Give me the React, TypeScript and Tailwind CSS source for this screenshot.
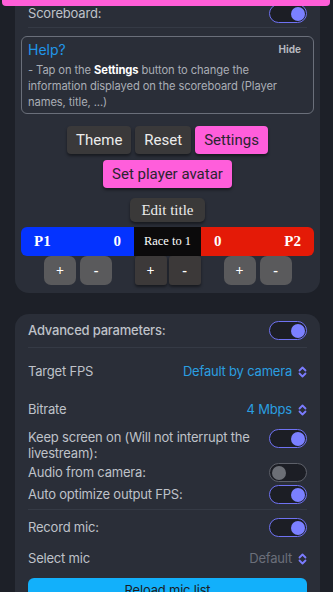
import React from "react";

const Toggle = ({ on = true }: { on?: boolean }) => (
  <div
    className={`w-[38px] h-[19px] rounded-full border-[1.5px] bg-[#1c1e25] flex items-center px-[1.5px] ${
      on ? "border-[#6f72f2] justify-end" : "border-[#5d6069] justify-start"
    }`}
  >
    <div className={`w-[14px] h-[14px] rounded-full ${on ? "bg-[#7b80ff]" : "bg-[#6c6f76]"}`} />
  </div>
);

const UpDown = () => (
  <svg width="9" height="12" viewBox="0 0 9 12" fill="none" stroke="#7b7cff" strokeWidth="1.8" strokeLinecap="round" strokeLinejoin="round">
    <path d="M1.5 4.5 L4.5 1.5 L7.5 4.5" />
    <path d="M1.5 7.5 L4.5 10.5 L7.5 7.5" />
  </svg>
);

const Dark = ({ children }: { children: React.ReactNode }) => (
  <button className="h-[28px] px-[9px] rounded-[4px] bg-[#3a393a] text-[#ececec] text-[15px] shadow-[0_2px_3px_rgba(0,0,0,0.45)]">
    {children}
  </button>
);

const Pink = ({ children }: { children: React.ReactNode }) => (
  <button className="h-[28px] px-[9px] rounded-[4px] bg-[#ff5edb] text-[#2b2430] text-[15px] shadow-[0_2px_3px_rgba(0,0,0,0.45)]">
    {children}
  </button>
);

const Step = ({ label, light = true }: { label: string; light?: boolean }) => (
  <button
    className={`w-[32px] h-[29px] flex items-center justify-center text-white text-[14px] font-bold ${
      light ? "bg-[#5a5a5c] rounded-[7px]" : "bg-[#3c3939] rounded-[3px] shadow-[0_2px_3px_rgba(0,0,0,0.45)]"
    }`}
  >
    {label}
  </button>
);

const App = () => {
  return (
    <div className="relative h-[592px] w-[333px] overflow-hidden bg-[#1d2028] font-['Inter',sans-serif]">
      <div className="absolute top-0 left-[2px] right-[3px] h-[6px] bg-[#ff5ed8] rounded-b-[4px] z-10" />

      <div className="ml-[15px] mr-[13px] bg-[#2a2e38] rounded-b-[14px] pt-[4px] pb-[8px]">
        <div className="flex items-center justify-between h-[19px] px-[13px]">
          <span className="text-[13px] tracking-[-0.2px] text-[#bfc2c9]">Scoreboard:</span>
          <Toggle />
        </div>
        <div className="mx-[13px] mt-[4px] border-b border-[#353a45]" />

        <div className="mx-[6px] mt-[8px] h-[78px] border-[1.5px] border-[#6a6f7a] rounded-[6px] px-[6px] pt-[3px]">
          <div className="flex items-center justify-between h-[19px]">
            <span className="text-[14px] text-[#2196e8]">Help?</span>
            <span className="text-[10px] font-bold text-[#b5b8bf] pr-[6px]">Hide</span>
          </div>
          <p className="mt-[3px] text-[11.2px] tracking-[-0.1px] leading-[16px] text-[#a9adb5]">
            - Tap on the <b className="text-white">Settings</b> button to change the information displayed on the scoreboard (Player names, title, ...)
          </p>
        </div>

        <div className="mt-[12px] flex flex-col items-center gap-[6px] font-['Roboto',sans-serif]">
          <div className="flex gap-[4px]">
            <Dark>Theme</Dark>
            <Dark>Reset</Dark>
            <Pink>Settings</Pink>
          </div>
          <Pink>Set player avatar</Pink>
          <button className="mt-[4px] h-[24px] px-[11px] rounded-[5px] bg-[#3a3939] text-[#ececec] text-[15px] font-['Liberation_Serif',serif] shadow-[0_2px_3px_rgba(0,0,0,0.45)]">
            Edit title
          </button>
        </div>

        <div className="mx-[6px] mt-[5px] flex font-['Liberation_Serif',serif]">
          <div className="w-[113px] flex flex-col items-center">
            <div className="w-full h-[29px] bg-[#0433ff] rounded-l-[6px] flex items-center justify-between px-[13px] text-white text-[15px] font-bold">
              <span>P1</span>
              <span>0</span>
            </div>
            <div className="flex gap-[4px] pl-[1px]">
              <Step label="+" />
              <Step label="-" />
            </div>
          </div>
          <div className="w-[67px] flex flex-col items-center">
            <div className="w-full h-[29px] bg-[#0b0a0b] flex items-center justify-center text-white text-[12.5px]">
              Race to 1
            </div>
            <div className="flex gap-[2px]">
              <Step label="+" light={false} />
              <Step label="-" light={false} />
            </div>
          </div>
          <div className="flex-1 flex flex-col items-center">
            <div className="w-full h-[29px] bg-[#e41a07] rounded-r-[6px] flex items-center justify-between px-[13px] text-white text-[15px] font-bold">
              <span>0</span>
              <span>P2</span>
            </div>
            <div className="flex gap-[4px]">
              <Step label="+" />
              <Step label="-" />
            </div>
          </div>
        </div>
      </div>

      <div className="ml-[15px] mr-[13px] mt-[21px] bg-[#2a2e38] rounded-t-[14px] pt-[7px] px-[13px] text-[13px] tracking-[-0.2px] text-[#bfc2c9]">
        <div className="flex items-center justify-between h-[19px]">
          <span className="font-medium">Advanced parameters:</span>
          <Toggle />
        </div>
        <div className="mt-[7px] border-b border-[#353a45]" />

        <div className="flex items-center justify-between h-[38px] mt-[5px]">
          <span>Target FPS</span>
          <span className="flex items-center gap-[6px] text-[#2a9fe0]">
            Default by camera <UpDown />
          </span>
        </div>
        <div className="flex items-center justify-between h-[38px]">
          <span>Bitrate</span>
          <span className="flex items-center gap-[6px] text-[#2a9fe0]">
            4 Mbps <UpDown />
          </span>
        </div>

        <div className="flex items-start justify-between">
          <span className="w-[240px] leading-[16px]">Keep screen on (Will not interrupt the livestream):</span>
          <Toggle />
        </div>
        <div className="flex items-center justify-between h-[19px] mt-[2px]">
          <span>Audio from camera:</span>
          <Toggle on={false} />
        </div>
        <div className="flex items-center justify-between h-[19px] mt-[3px]">
          <span>Auto optimize output FPS:</span>
          <Toggle />
        </div>
        <div className="mt-[5px] border-b border-[#353a45]" />

        <div className="flex items-center justify-between h-[19px] mt-[8px]">
          <span>Record mic:</span>
          <Toggle />
        </div>
        <div className="flex items-center justify-between h-[31px] mt-[6px]">
          <span>Select mic</span>
          <span className="flex items-center gap-[6px] text-[#6b6f7a]">
            Default <UpDown />
          </span>
        </div>
        <button className="mt-[4px] w-full h-[26px] rounded-[6px] bg-[#12b0fb] text-[#1a1d24] text-[13px]">
          Reload mic list
        </button>
      </div>
    </div>
  );
};

export default App;
